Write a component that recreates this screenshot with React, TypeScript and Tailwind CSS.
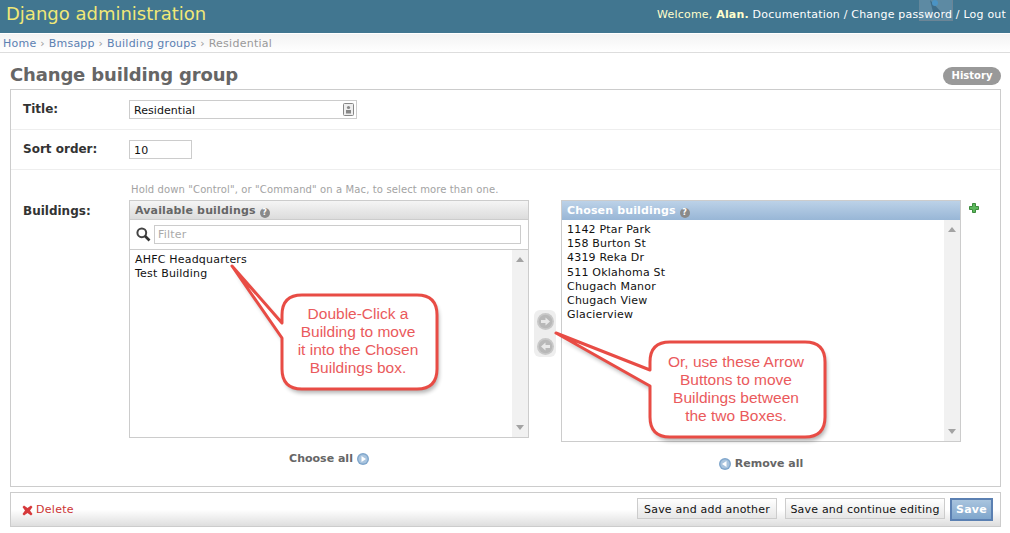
const vera = "font-['DejaVu_Sans',Verdana,sans-serif]";

const Arrow = ({ dir, blue }: { dir: "left" | "right"; blue?: boolean }) => (
  <svg width="12" height="12" viewBox="0 0 12 12">
    <circle cx="6" cy="6" r="6" fill={blue ? "#7fa6cc" : "#bdbdbd"} />
    <circle cx="6" cy="6" r="4.6" fill={blue ? "#a9c4de" : "#cfcfcf"} />
    <path d={dir === "right" ? "M4.5 3 L9 6 L4.5 9 Z" : "M7.5 3 L3 6 L7.5 9 Z"} fill="#fff" />
  </svg>
);

const MoveBtn = ({ dir }: { dir: "left" | "right" }) => (
  <svg width="17" height="17" viewBox="0 0 17 17">
    <circle cx="8.5" cy="8.5" r="8.5" fill="#c8c8c8" />
    <circle cx="8.5" cy="8.5" r="6.8" fill="#b8b8b8" />
    <path
      d={dir === "right" ? "M4 7 H8.5 V4.5 L13 8.5 L8.5 12.5 V10 H4 Z" : "M13 7 H8.5 V4.5 L4 8.5 L8.5 12.5 V10 H13 Z"}
      fill="#e8e8e8"
    />
  </svg>
);

const Help = () => (
  <span className="inline-flex w-[10px] h-[10px] rounded-full bg-[#8a8a8a] text-white text-[8px] leading-[10px] font-bold justify-center ml-[4px] align-[-1px] tracking-normal">
    ?
  </span>
);

const Scrollbar = () => (
  <div className="w-[16px] shrink-0 bg-[#f1f1f1] flex flex-col justify-between items-center py-[7px]">
    <div className="w-0 h-0 border-x-[4px] border-x-transparent border-b-[5px] border-b-[#a3a3a3]" />
    <div className="w-0 h-0 border-x-[4px] border-x-transparent border-t-[5px] border-t-[#a3a3a3]" />
  </div>
);

const Callout = ({ className, path, lines }: { className: string; path: string; lines: string[] }) => (
  <div className={`absolute ${className}`}>
    <svg className="absolute left-0 top-0 overflow-visible" width="1" height="1">
      <path d={path} fill="#000" opacity="0.3" transform="translate(2 4)" style={{ filter: "blur(2px)" }} />
      <path d={path} fill="#fff" stroke="#e84c45" strokeWidth="3" strokeLinejoin="round" />
    </svg>
    <div className="relative w-full h-full pr-[3px] pb-[2px] flex flex-col items-center justify-center font-['Liberation_Sans',Arial,sans-serif] text-[15.5px] tracking-normal leading-[18px] text-[#ea5a5c]">
      {lines.map((l) => (
        <div key={l}>{l}</div>
      ))}
    </div>
  </div>
);

const App = () => {
  return (
    <div className={`relative w-[1010px] h-[533px] overflow-hidden bg-white text-[11px] tracking-[0.2px] text-[#333] ${vera}`}>
      {/* header */}
      <div className="relative h-[33px] bg-[#417690] flex items-center justify-between pl-[6px] pr-[4px]">
        {/* ghost of a cursor image left in the screenshot */}
        <svg className="absolute left-[919px] top-0" width="34" height="21" viewBox="0 0 34 21">
          <rect x="0" y="-1" width="33.5" height="21.5" fill="#5d8aa3" stroke="#6b8596" />
          <path d="M11 0 L24 14 Q26 19 21 18 Q16 17 14 12 L11 0" fill="#3e6c88" />
          <circle cx="16" cy="3" r="3" fill="#4b93c4" />
        </svg>
        <div className="relative text-[18px] tracking-normal text-[#f0e877] -mt-[7px]">Django administration</div>
        <div className="relative text-[11px] text-white -mt-[2px]">
          <span className="text-[#ffc]">
            Welcome, <b>Alan.</b>
          </span>{" "}
          Documentation / Change password / Log out
        </div>
      </div>

      {/* breadcrumbs */}
      <div className="h-[20px] border-t border-white border-b border-b-[#dddddd] bg-gradient-to-b from-[#f3f3f3] to-white pl-[3px] leading-[20px] tracking-[0.25px] text-[#999]">
        <span className="text-[#5b80b2]">Home</span> › <span className="text-[#5b80b2]">Bmsapp</span> ›{" "}
        <span className="text-[#5b80b2]">Building groups</span> › Residential
      </div>

      {/* content */}
      <div className="pl-[10px] pr-[9px] pt-[11px]">
        <div className="flex items-center justify-between h-[25px]">
          <h1 className="text-[18px] font-bold text-[#666] leading-[24px] tracking-[-0.15px] -mt-[4px]">Change building group</h1>
          <a className="-mt-[1px] h-[18px] w-[58px] rounded-[9px] bg-[#999] text-white text-[10px] font-bold text-center leading-[18px] tracking-normal">
            History
          </a>
        </div>

        <div className="border border-[#ccc] h-[398px] flex flex-col">
          <div className="h-[40px] border-b border-[#eee] flex items-center pl-[12px]">
            <label className="w-[106px] font-bold text-[12px] tracking-normal -mt-[2px]">Title:</label>
            <div className="w-[228px] h-[19px] border border-[#ccc] flex items-center justify-between pl-[4px] pr-[2px] text-[#111]">
              <span className="mt-[3px] tracking-[0.05px]">Residential</span>
              <svg width="11" height="13" viewBox="0 0 11 13">
                <rect x="0.5" y="0.5" width="10" height="12" rx="1" fill="#eee" stroke="#888" />
                <circle cx="5.5" cy="4.5" r="1.6" fill="#888" />
                <rect x="3" y="7" width="5" height="3.5" fill="#888" />
              </svg>
            </div>
          </div>
          <div className="h-[40px] border-b border-[#eee] flex items-center pl-[12px]">
            <label className="w-[106px] font-bold text-[12px] tracking-normal -mt-[2px]">Sort order:</label>
            <div className="w-[63px] h-[19px] border border-[#ccc] flex items-center pl-[4px] text-[#111]">
              <span className="mt-[3px]">10</span>
            </div>
          </div>

          <div className="flex-1 flex pl-[12px]">
            <label className="w-[106px] font-bold text-[12px] tracking-normal mt-[32px] shrink-0">Buildings:</label>
            <div>
              <p className="text-[10px] tracking-[0.12px] text-[#a3a3a3] h-[30px] pt-[13px] pl-[2px] leading-[14px]">
                Hold down "Control", or "Command" on a Mac, to select more than one.
              </p>
              <div className="flex items-start">
                {/* available */}
                <div className="w-[400px]">
                  <div className="h-[238px] border border-[#ccc] flex flex-col">
                    <div className="h-[19px] shrink-0 bg-gradient-to-b from-[#f5f5f5] to-[#dcdcdc] border-b border-[#ccc] pl-[5px] font-bold tracking-[0.15px] text-[#666] leading-[20px]">
                      Available buildings
                      <Help />
                    </div>
                    <div className="h-[30px] shrink-0 border-b border-[#ccc] flex items-center pl-[6px] pr-[7px] gap-[3px]">
                      <svg width="15" height="15" viewBox="0 0 15 15">
                        <circle cx="5.8" cy="5.8" r="4.4" fill="#fff" stroke="#444" strokeWidth="2" />
                        <path d="M9 9 L13.5 13.5" stroke="#333" strokeWidth="2.6" />
                      </svg>
                      <div className="flex-1 h-[19px] border border-[#ccc] pl-[3px] text-[#aaa] leading-[17px]">Filter</div>
                    </div>
                    <div className="flex-1 flex min-h-0">
                      <div className="flex-1 pl-[5px] pt-[3px] leading-[14px] text-[#111]">
                        <div>AHFC Headquarters</div>
                        <div>Test Building</div>
                      </div>
                      <Scrollbar />
                    </div>
                  </div>
                  <div className="mt-[14px] flex items-center justify-center gap-[4px] font-bold tracking-normal text-[#666] leading-[14px]">
                    Choose all <Arrow dir="right" blue />
                  </div>
                </div>

                {/* move buttons */}
                <div className="w-[32px] shrink-0 flex justify-center pt-[110px]">
                  <div className="w-[22px] h-[47px] rounded-[6px] bg-[#eeeeee] flex flex-col items-center justify-center gap-[8px]">
                    <MoveBtn dir="right" />
                    <MoveBtn dir="left" />
                  </div>
                </div>

                {/* chosen */}
                <div className="w-[400px]">
                  <div className="h-[242px] border border-[#ccc] flex flex-col">
                    <div className="h-[19px] shrink-0 bg-gradient-to-b from-[#bcd2e8] to-[#98b6d6] pl-[5px] font-bold tracking-[0.15px] text-white leading-[20px]">
                      Chosen buildings
                      <Help />
                    </div>
                    <div className="flex-1 flex min-h-0">
                      <div className="flex-1 pl-[5px] pt-[3px] leading-[14.2px] text-[#111]">
                        {["1142 Ptar Park", "158 Burton St", "4319 Reka Dr", "511 Oklahoma St", "Chugach Manor", "Chugach View", "Glacierview"].map((b) => (
                          <div key={b}>{b}</div>
                        ))}
                      </div>
                      <Scrollbar />
                    </div>
                  </div>
                  <div className="mt-[15px] flex items-center justify-center gap-[4px] font-bold tracking-normal text-[#666] leading-[14px]">
                    <Arrow dir="left" blue /> Remove all
                  </div>
                </div>

                <svg className="ml-[8px] mt-[3px]" width="10" height="10" viewBox="0 0 10 10">
                  <path d="M3.5 0.5 H6.5 V3.5 H9.5 V6.5 H6.5 V9.5 H3.5 V6.5 H0.5 V3.5 H3.5 Z" fill="#5cb85c" stroke="#3d8b3d" />
                </svg>
              </div>
            </div>
          </div>
        </div>

        {/* submit row */}
        <div className="mt-[5px] h-[35px] border border-[#ccc] bg-gradient-to-b from-white via-white to-[#dedede] flex items-center justify-between pl-[11px] pr-[7px]">
          <div className="mt-[2px] flex items-center gap-[3px] text-[#cc3434] tracking-[0.3px]">
            <svg width="11" height="11" viewBox="0 0 11 11">
              <path d="M2 0.5 L5.5 3 L9 0.5 L10.5 2 L8 5.5 L10.5 9 L9 10.5 L5.5 8 L2 10.5 L0.5 9 L3 5.5 L0.5 2 Z" fill="#d6393b" />
            </svg>
            Delete
          </div>
          <div className="flex items-center text-[#111]">
            <div className="-mt-[2px] h-[21px] w-[140px] text-center border border-[#ccc] bg-gradient-to-b from-white to-[#e6e6e6] leading-[21px]">Save and add another</div>
            <div className="-mt-[2px] ml-[8px] h-[21px] w-[160px] text-center border border-[#ccc] bg-gradient-to-b from-white to-[#e6e6e6] leading-[21px]">Save and continue editing</div>
            <div className="ml-[5px] h-[23px] w-[43px] border-2 border-[#5b80b2] bg-gradient-to-b from-[#a9c4de] to-[#7fa6cc] text-white font-bold text-center leading-[19px]">Save</div>
          </div>
        </div>
      </div>

      <Callout
        className="left-[282px] top-[295px] w-[155px] h-[94px]"
        path="M0 20 Q0 0 20 0 H135 Q155 0 155 20 V74 Q155 94 135 94 H20 Q0 94 0 74 V43 L-50 -29 L0 28 Z"
        lines={["Double-Click a", "Building to move", "it into the Chosen", "Buildings box."]}
      />
      <Callout
        className="left-[650px] top-[342px] w-[175px] h-[95px]"
        path="M0 20 Q0 0 20 0 H155 Q175 0 175 20 V75 Q175 95 155 95 H20 Q0 95 0 75 V44 L-94 -9 L0 28 Z"
        lines={["Or, use these Arrow", "Buttons to move", "Buildings between", "the two Boxes."]}
      />
    </div>
  );
};

export default App;
